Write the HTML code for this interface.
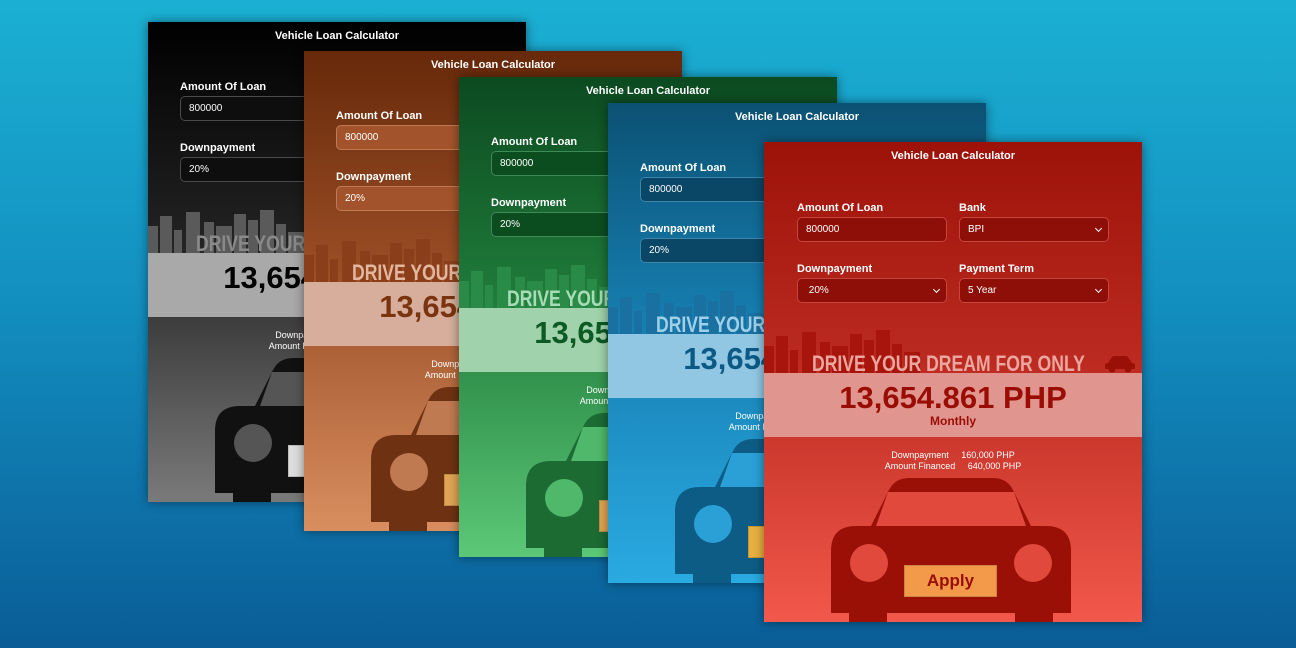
<!DOCTYPE html>
<html><head><meta charset="utf-8"><style>
*{margin:0;padding:0;box-sizing:border-box}
body{width:1296px;height:648px;overflow:hidden;background:linear-gradient(180deg,#1bb0d3 0%,#1390c0 45%,#0a5d97 100%);font-family:"Liberation Sans",sans-serif;position:relative}
.card{position:absolute;width:378px;height:480px;overflow:hidden;box-shadow:0 0 10px rgba(0,0,0,.45);background:linear-gradient(180deg,var(--t) 0%,var(--m) 45%,var(--b) 100%)}
.title{position:absolute;top:8px;left:0;width:100%;text-align:center;color:#fff;font-weight:bold;font-size:11px}
.lbl{position:absolute;color:#fff;font-weight:bold;font-size:11px}
.inp{position:absolute;width:150px;height:25px;border-radius:5px;background:var(--i);border:1px solid var(--ib);color:#fff;font-size:10px;padding:6px 0 0 8px}
.inp.s::after{content:"";position:absolute;right:7px;top:8px;width:4px;height:4px;border-right:1.5px solid #fff;border-bottom:1.5px solid #fff;transform:rotate(45deg)}
.sky{position:absolute;left:0;top:186px}
.drive{position:absolute;left:48px;top:211px;font-weight:bold;font-size:22px;color:var(--d);white-space:nowrap;transform:scaleX(0.8);transform-origin:0 0;line-height:22px}
.mini{position:absolute;left:340px;top:213px}
.band{position:absolute;left:0;top:231px;width:100%;height:64px;background:var(--band);text-align:center;color:var(--n)}
.num{font-weight:bold;font-size:31px;line-height:32px;margin-top:9px}
.mon{font-weight:bold;font-size:12px}
.det{position:absolute;top:308px;width:100%;text-align:center;color:#fff;font-size:9px;line-height:11px}
.car{position:absolute;left:67px;top:336px}
.apply{position:absolute;left:140px;top:423px;width:93px;height:32px;background:var(--ap);border:1px solid rgba(0,0,0,.15);color:var(--n);font-weight:bold;font-size:17px;text-align:center;line-height:30px}
</style></head><body>

<div class="card" style="left:148px;top:22px;--t:#000;--m:#222;--b:#7a7a7a;--i:#0e0e0e;--ib:#4a4a4a;--d:#8a8a8a;--band:#a9a9a9;--n:#000;--c:#111;--w:#555;--ap:#ddd;--sk:#5a5a5a">
<div class="title">Vehicle Loan Calculator</div>
<div class="lbl" style="left:32px;top:59px">Amount Of Loan</div><div class="inp" style="left:32px;top:74px">800000</div>
<div class="lbl" style="left:195px;top:59px">Bank</div><div class="inp s" style="left:195px;top:74px">BPI</div>
<div class="lbl" style="left:32px;top:120px">Downpayment</div><div class="inp s" style="left:32px;top:135px">20%</div>
<div class="lbl" style="left:195px;top:120px">Payment Term</div><div class="inp s" style="left:195px;top:135px">5 Year</div>
<svg class="sky" width="378" height="46"><g fill="var(--sk)"><rect x="0" y="18" width="10" height="28"/><rect x="12" y="8" width="12" height="38"/><rect x="26" y="22" width="8" height="24"/><rect x="38" y="4" width="14" height="42"/><rect x="56" y="14" width="10" height="32"/><rect x="68" y="18" width="16" height="28"/><rect x="86" y="6" width="12" height="40"/><rect x="100" y="12" width="10" height="34"/><rect x="112" y="2" width="14" height="44"/><rect x="128" y="16" width="10" height="30"/><rect x="140" y="24" width="16" height="22"/></g></svg>
<div class="drive">DRIVE YOUR DREAM FOR ONLY</div>
<svg class="mini" width="32" height="18" viewBox="0 0 32 18"><path d="M4 8 L8 2 Q9 1 11 1 L21 1 Q23 1 24 2 L28 8 Q31 8 31 11 L31 14 L1 14 L1 11 Q1 8 4 8Z" fill="var(--c)"/><circle cx="8" cy="14" r="3.5" fill="var(--c)"/><circle cx="24" cy="14" r="3.5" fill="var(--c)"/></svg>
<div class="band"><div class="num">13,654.861 PHP</div><div class="mon">Monthly</div></div>
<div class="det">Downpayment &nbsp;&nbsp;&nbsp; 160,000 PHP<br>Amount Financed &nbsp;&nbsp;&nbsp; 640,000 PHP</div>
<svg class="car" width="240" height="145" viewBox="0 0 240 145"><path d="M40 48 L58 12 Q64 0 78 0 L162 0 Q176 0 182 12 L200 48 L215 48 Q240 48 240 73 L240 135 L0 135 L0 73 Q0 48 25 48Z" fill="var(--c)"/><rect x="18" y="130" width="38" height="15" fill="var(--c)"/><rect x="184" y="130" width="38" height="15" fill="var(--c)"/><path d="M45 48 L57 14 L183 14 L195 48Z" fill="var(--w)"/><circle cx="38" cy="85" r="19" fill="var(--w)"/><circle cx="202" cy="85" r="19" fill="var(--w)"/></svg>
<div class="apply">Apply</div>
</div>

<div class="card" style="left:304px;top:51px;--t:#66290a;--m:#9a4d25;--b:#d98e60;--i:#a3532b;--ib:#c07a55;--d:#e3b79e;--band:#d6ae9b;--n:#7a3410;--c:#6e3212;--w:#c07a52;--ap:#e0a555;--sk:#8a3f1a">
<div class="title">Vehicle Loan Calculator</div>
<div class="lbl" style="left:32px;top:59px">Amount Of Loan</div><div class="inp" style="left:32px;top:74px">800000</div>
<div class="lbl" style="left:195px;top:59px">Bank</div><div class="inp s" style="left:195px;top:74px">BPI</div>
<div class="lbl" style="left:32px;top:120px">Downpayment</div><div class="inp s" style="left:32px;top:135px">20%</div>
<div class="lbl" style="left:195px;top:120px">Payment Term</div><div class="inp s" style="left:195px;top:135px">5 Year</div>
<svg class="sky" width="378" height="46"><g fill="var(--sk)"><rect x="0" y="18" width="10" height="28"/><rect x="12" y="8" width="12" height="38"/><rect x="26" y="22" width="8" height="24"/><rect x="38" y="4" width="14" height="42"/><rect x="56" y="14" width="10" height="32"/><rect x="68" y="18" width="16" height="28"/><rect x="86" y="6" width="12" height="40"/><rect x="100" y="12" width="10" height="34"/><rect x="112" y="2" width="14" height="44"/><rect x="128" y="16" width="10" height="30"/><rect x="140" y="24" width="16" height="22"/></g></svg>
<div class="drive">DRIVE YOUR DREAM FOR ONLY</div>
<div class="band"><div class="num">13,654.861 PHP</div><div class="mon">Monthly</div></div>
<div class="det">Downpayment &nbsp;&nbsp;&nbsp; 160,000 PHP<br>Amount Financed &nbsp;&nbsp;&nbsp; 640,000 PHP</div>
<svg class="car" width="240" height="145" viewBox="0 0 240 145"><path d="M40 48 L58 12 Q64 0 78 0 L162 0 Q176 0 182 12 L200 48 L215 48 Q240 48 240 73 L240 135 L0 135 L0 73 Q0 48 25 48Z" fill="var(--c)"/><rect x="18" y="130" width="38" height="15" fill="var(--c)"/><rect x="184" y="130" width="38" height="15" fill="var(--c)"/><path d="M45 48 L57 14 L183 14 L195 48Z" fill="var(--w)"/><circle cx="38" cy="85" r="19" fill="var(--w)"/><circle cx="202" cy="85" r="19" fill="var(--w)"/></svg>
<div class="apply">Apply</div>
</div>

<div class="card" style="left:459px;top:77px;--t:#0c4a20;--m:#1f7a3a;--b:#5cc877;--i:#0c4d20;--ib:#3e8a56;--d:#a8dcb5;--band:#a0d3ab;--n:#0d5a25;--c:#1b6b33;--w:#4fb86b;--ap:#e0a555;--sk:#2a8a48">
<div class="title">Vehicle Loan Calculator</div>
<div class="lbl" style="left:32px;top:59px">Amount Of Loan</div><div class="inp" style="left:32px;top:74px">800000</div>
<div class="lbl" style="left:195px;top:59px">Bank</div><div class="inp s" style="left:195px;top:74px">BPI</div>
<div class="lbl" style="left:32px;top:120px">Downpayment</div><div class="inp s" style="left:32px;top:135px">20%</div>
<div class="lbl" style="left:195px;top:120px">Payment Term</div><div class="inp s" style="left:195px;top:135px">5 Year</div>
<svg class="sky" width="378" height="46"><g fill="var(--sk)"><rect x="0" y="18" width="10" height="28"/><rect x="12" y="8" width="12" height="38"/><rect x="26" y="22" width="8" height="24"/><rect x="38" y="4" width="14" height="42"/><rect x="56" y="14" width="10" height="32"/><rect x="68" y="18" width="16" height="28"/><rect x="86" y="6" width="12" height="40"/><rect x="100" y="12" width="10" height="34"/><rect x="112" y="2" width="14" height="44"/><rect x="128" y="16" width="10" height="30"/><rect x="140" y="24" width="16" height="22"/></g></svg>
<div class="drive">DRIVE YOUR DREAM FOR ONLY</div>
<div class="band"><div class="num">13,654.861 PHP</div><div class="mon">Monthly</div></div>
<div class="det">Downpayment &nbsp;&nbsp;&nbsp; 160,000 PHP<br>Amount Financed &nbsp;&nbsp;&nbsp; 640,000 PHP</div>
<svg class="car" width="240" height="145" viewBox="0 0 240 145"><path d="M40 48 L58 12 Q64 0 78 0 L162 0 Q176 0 182 12 L200 48 L215 48 Q240 48 240 73 L240 135 L0 135 L0 73 Q0 48 25 48Z" fill="var(--c)"/><rect x="18" y="130" width="38" height="15" fill="var(--c)"/><rect x="184" y="130" width="38" height="15" fill="var(--c)"/><path d="M45 48 L57 14 L183 14 L195 48Z" fill="var(--w)"/><circle cx="38" cy="85" r="19" fill="var(--w)"/><circle cx="202" cy="85" r="19" fill="var(--w)"/></svg>
<div class="apply">Apply</div>
</div>

<div class="card" style="left:608px;top:103px;--t:#0b5173;--m:#167eb0;--b:#2aaae2;--i:#0a4666;--ib:#3d85aa;--d:#9fd0ea;--band:#92c7e3;--n:#0a5a85;--c:#0d5c85;--w:#2aa0d6;--ap:#e8b040;--sk:#1a70a0">
<div class="title">Vehicle Loan Calculator</div>
<div class="lbl" style="left:32px;top:59px">Amount Of Loan</div><div class="inp" style="left:32px;top:74px">800000</div>
<div class="lbl" style="left:195px;top:59px">Bank</div><div class="inp s" style="left:195px;top:74px">BPI</div>
<div class="lbl" style="left:32px;top:120px">Downpayment</div><div class="inp s" style="left:32px;top:135px">20%</div>
<div class="lbl" style="left:195px;top:120px">Payment Term</div><div class="inp s" style="left:195px;top:135px">5 Year</div>
<svg class="sky" width="378" height="46"><g fill="var(--sk)"><rect x="0" y="18" width="10" height="28"/><rect x="12" y="8" width="12" height="38"/><rect x="26" y="22" width="8" height="24"/><rect x="38" y="4" width="14" height="42"/><rect x="56" y="14" width="10" height="32"/><rect x="68" y="18" width="16" height="28"/><rect x="86" y="6" width="12" height="40"/><rect x="100" y="12" width="10" height="34"/><rect x="112" y="2" width="14" height="44"/><rect x="128" y="16" width="10" height="30"/><rect x="140" y="24" width="16" height="22"/></g></svg>
<div class="drive">DRIVE YOUR DREAM FOR ONLY</div>
<div class="band"><div class="num">13,654.861 PHP</div><div class="mon">Monthly</div></div>
<div class="det">Downpayment &nbsp;&nbsp;&nbsp; 160,000 PHP<br>Amount Financed &nbsp;&nbsp;&nbsp; 640,000 PHP</div>
<svg class="car" width="240" height="145" viewBox="0 0 240 145"><path d="M40 48 L58 12 Q64 0 78 0 L162 0 Q176 0 182 12 L200 48 L215 48 Q240 48 240 73 L240 135 L0 135 L0 73 Q0 48 25 48Z" fill="var(--c)"/><rect x="18" y="130" width="38" height="15" fill="var(--c)"/><rect x="184" y="130" width="38" height="15" fill="var(--c)"/><path d="M45 48 L57 14 L183 14 L195 48Z" fill="var(--w)"/><circle cx="38" cy="85" r="19" fill="var(--w)"/><circle cx="202" cy="85" r="19" fill="var(--w)"/></svg>
<div class="apply">Apply</div>
</div>

<div class="card" style="left:764px;top:142px;--t:#9c1209;--m:#bb2a20;--b:#f2584b;--i:#8e0f08;--ib:#c8453b;--d:#eaa69f;--band:#e0968e;--n:#9a0d05;--c:#9a0f06;--w:#e0493c;--ap:#f39a4a;--sk:#a8150c">
<div class="title">Vehicle Loan Calculator</div>
<div class="lbl" style="left:33px;top:60px">Amount Of Loan</div><div class="inp" style="left:33px;top:75px">800000</div>
<div class="lbl" style="left:195px;top:60px">Bank</div><div class="inp s" style="left:195px;top:75px">BPI</div>
<div class="lbl" style="left:33px;top:121px">Downpayment</div><div class="inp s" style="left:33px;top:136px">&nbsp;20%</div>
<div class="lbl" style="left:195px;top:121px">Payment Term</div><div class="inp s" style="left:195px;top:136px">5 Year</div>
<svg class="sky" width="378" height="46"><g fill="var(--sk)"><rect x="0" y="18" width="10" height="28"/><rect x="12" y="8" width="12" height="38"/><rect x="26" y="22" width="8" height="24"/><rect x="38" y="4" width="14" height="42"/><rect x="56" y="14" width="10" height="32"/><rect x="68" y="18" width="16" height="28"/><rect x="86" y="6" width="12" height="40"/><rect x="100" y="12" width="10" height="34"/><rect x="112" y="2" width="14" height="44"/><rect x="128" y="16" width="10" height="30"/><rect x="140" y="24" width="16" height="22"/></g></svg>
<div class="drive">DRIVE YOUR DREAM FOR ONLY</div>
<svg class="mini" width="32" height="18" viewBox="0 0 32 18"><path d="M4 8 L8 2 Q9 1 11 1 L21 1 Q23 1 24 2 L28 8 Q31 8 31 11 L31 14 L1 14 L1 11 Q1 8 4 8Z" fill="var(--c)"/><circle cx="8" cy="14" r="3.5" fill="var(--c)"/><circle cx="24" cy="14" r="3.5" fill="var(--c)"/></svg>
<div class="band"><div class="num">13,654.861 PHP</div><div class="mon">Monthly</div></div>
<div class="det">Downpayment &nbsp;&nbsp;&nbsp; 160,000 PHP<br>Amount Financed &nbsp;&nbsp;&nbsp; 640,000 PHP</div>
<svg class="car" width="240" height="145" viewBox="0 0 240 145"><path d="M40 48 L58 12 Q64 0 78 0 L162 0 Q176 0 182 12 L200 48 L215 48 Q240 48 240 73 L240 135 L0 135 L0 73 Q0 48 25 48Z" fill="var(--c)"/><rect x="18" y="130" width="38" height="15" fill="var(--c)"/><rect x="184" y="130" width="38" height="15" fill="var(--c)"/><path d="M45 48 L57 14 L183 14 L195 48Z" fill="var(--w)"/><circle cx="38" cy="85" r="19" fill="var(--w)"/><circle cx="202" cy="85" r="19" fill="var(--w)"/></svg>
<div class="apply">Apply</div>
</div>

</body></html>
